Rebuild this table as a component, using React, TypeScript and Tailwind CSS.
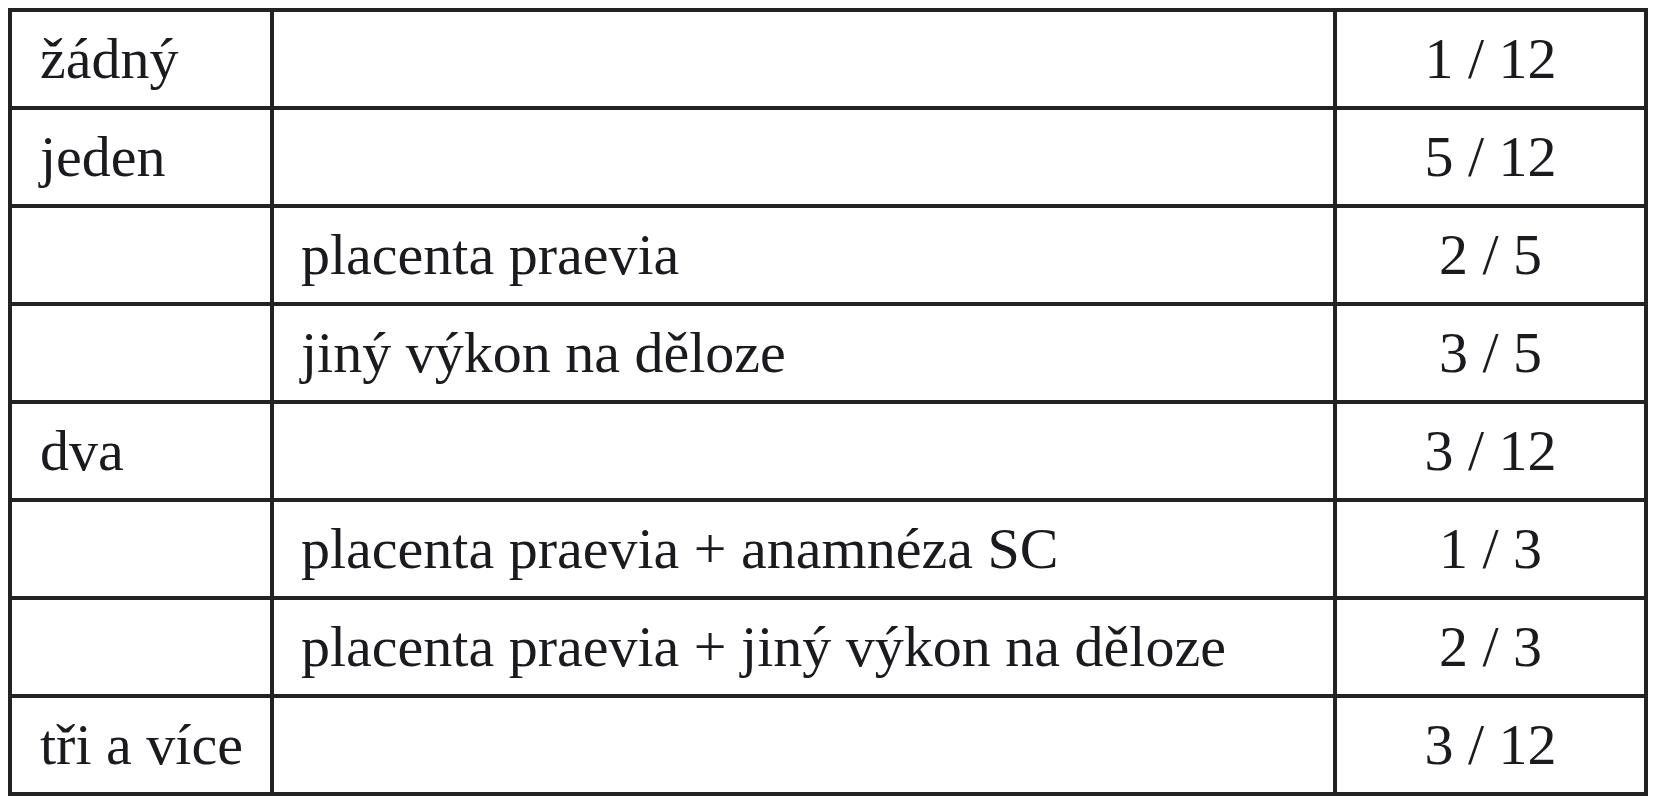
const rows: [string, string, string][] = [
  ['žádný', '', '1 / 12'],
  ['jeden', '', '5 / 12'],
  ['', 'placenta praevia', '2 / 5'],
  ['', 'jiný výkon na děloze', '3 / 5'],
  ['dva', '', '3 / 12'],
  ['', 'placenta praevia + anamnéza SC', '1 / 3'],
  ['', 'placenta praevia + jiný výkon na děloze', '2 / 3'],
  ['tři a více', '', '3 / 12'],
];

export default function App() {
  return (
    <div className="w-[1659px] h-[800px] bg-white pl-2 pt-2">
      <div
        className="grid w-[1640px] grid-cols-[262px_1063px_311px] border-l-4 border-t-4 border-[#222222] text-[58px] text-[#1a1a1f]"
        style={{ fontFamily: '"Liberation Serif", "Times New Roman", serif' }}
      >
        {rows.map(([a, b, c], i) => (
          <div key={i} className="contents">
            <div className="flex h-[98px] items-center border-b-4 border-r-4 border-[#222222] pl-[28px] leading-none">
              {a}
            </div>
            <div className="flex h-[98px] items-center border-b-4 border-r-4 border-[#222222] pl-[27px] leading-none">
              {b}
            </div>
            <div className="flex h-[98px] items-center justify-center border-b-4 border-r-4 border-[#222222] leading-none">
              {c}
            </div>
          </div>
        ))}
      </div>
    </div>
  );
}
